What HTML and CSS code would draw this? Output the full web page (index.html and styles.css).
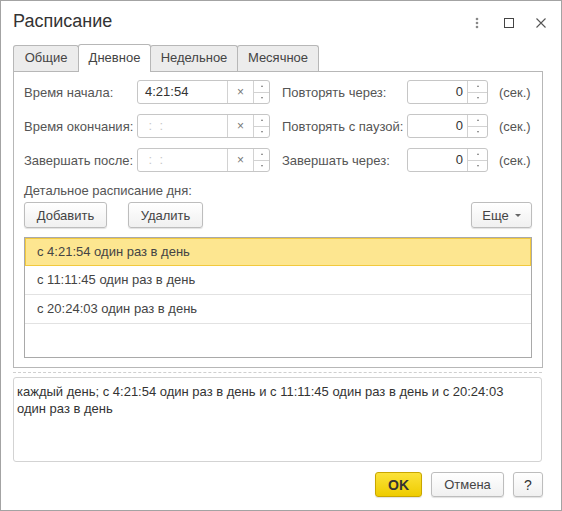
FILE: index.html
```html
<!DOCTYPE html>
<html lang="ru">
<head>
  <meta charset="UTF-8" />
  <title>Расписание</title>
  <link rel="stylesheet" href="styles.css">
</head>
<body>
  <div class="window">
    <div class="titlebar">
      <h1>Расписание</h1>
      <div class="win-icons">
        <svg class="ico-more" width="4" height="12" viewBox="0 0 4 12"><circle cx="2" cy="2" r="1.3" fill="#888"/><circle cx="2" cy="6" r="1.3" fill="#888"/><circle cx="2" cy="10" r="1.3" fill="#888"/></svg>
        <svg class="ico-max" width="10" height="10" viewBox="0 0 10 10"><rect x="0.5" y="0.5" width="9" height="9" fill="none" stroke="#444" stroke-width="1"/></svg>
        <svg class="ico-close" width="10" height="10" viewBox="0 0 10 10"><path d="M0.5 0.5L9.5 9.5M9.5 0.5L0.5 9.5" stroke="#555" stroke-width="1.1"/></svg>
      </div>
    </div>

    <div class="tabs">
      <div class="tab t1">Общие</div>
      <div class="tab t2 active">Дневное</div>
      <div class="tab t3">Недельное</div>
      <div class="tab t4">Месячное</div>
    </div>

    <div class="panel">
      <div class="fields">
        <label>Время начала:</label>
        <div class="time-input">
          <span class="value">4:21:54</span>
          <span class="clear">×</span>
          <span class="spin"><i class="up"></i><i class="down"></i></span>
        </div>
        <label class="right">Повторять через:</label>
        <div class="num-input">
          <span class="value">0</span>
          <span class="spin"><i class="up"></i><i class="down"></i></span>
        </div>
        <span class="unit">(сек.)</span>

        <label>Время окончания:</label>
        <div class="time-input">
          <span class="value empty">&nbsp;:&nbsp;&nbsp;:</span>
          <span class="clear">×</span>
          <span class="spin"><i class="up"></i><i class="down"></i></span>
        </div>
        <label class="right">Повторять с паузой:</label>
        <div class="num-input">
          <span class="value">0</span>
          <span class="spin"><i class="up"></i><i class="down"></i></span>
        </div>
        <span class="unit">(сек.)</span>

        <label>Завершать после:</label>
        <div class="time-input">
          <span class="value empty">&nbsp;:&nbsp;&nbsp;:</span>
          <span class="clear">×</span>
          <span class="spin"><i class="up"></i><i class="down"></i></span>
        </div>
        <label class="right">Завершать через:</label>
        <div class="num-input">
          <span class="value">0</span>
          <span class="spin"><i class="up"></i><i class="down"></i></span>
        </div>
        <span class="unit">(сек.)</span>
      </div>

      <div class="detail-label">Детальное расписание дня:</div>
      <div class="toolbar">
        <button class="btn add">Добавить</button>
        <button class="btn del">Удалить</button>
        <button class="btn more">Еще <i class="caret"></i></button>
      </div>

      <div class="list">
        <div class="row selected">с 4:21:54 один раз в день</div>
        <div class="row">с 11:11:45 один раз в день</div>
        <div class="row">с 20:24:03 один раз в день</div>
      </div>
    </div>

    <div class="dashed"></div>

    <div class="summary">каждый день; с 4:21:54 один раз в день и с 11:11:45 один раз в день и с 20:24:03 один раз в день</div>

    <div class="footer">
      <button class="btn ok">OK</button>
      <button class="btn cancel">Отмена</button>
      <button class="btn help">?</button>
    </div>
  </div>
</body>
</html>
```

FILE: styles.css
```css
body {
  margin: 0;
  font-family: "Liberation Sans", Arial, sans-serif;
  font-size: 13px;
  color: #333;
  background: #fff;
}

.window {
  width: 562px;
  height: 511px;
  box-sizing: border-box;
  border: 1px solid #a3a3a3;
  padding: 0 18px 0 12px;
  background: #fff;
}

.titlebar {
  height: 43px;
  display: flex;
  align-items: flex-start;
  justify-content: space-between;
}

h1 {
  margin: 10px 0 0 0;
  font-size: 18px;
  font-weight: normal;
  line-height: 20px;
  color: #333;
}

.win-icons {
  display: flex;
  align-items: center;
  margin-top: 16px;
  margin-right: -3px;
}

.ico-max {
  margin-left: 25px;
}

.ico-close {
  margin-left: 22px;
}

.tabs {
  display: flex;
  align-items: flex-end;
  height: 28px;
  margin-bottom: -1px;
  position: relative;
  z-index: 1;
}

.tab {
  height: 26px;
  box-sizing: border-box;
  text-align: center;
  line-height: 24px;
  border: 1px solid #b7b7b7;
  border-bottom: none;
  border-radius: 3px 3px 0 0;
  background: #ececec;
  color: #444;
  margin-right: -1px;
  margin-bottom: 1px;
}

.t1 { width: 66px; }
.t2 { width: 73px; }
.t3 { width: 88px; }
.t4 { width: 82px; }

.tab.active {
  height: 28px;
  margin-bottom: 0;
  background: #fff;
  line-height: 26px;
}

.panel {
  width: 530px;
  height: 297px;
  box-sizing: border-box;
  border: 1px solid #b7b7b7;
  padding: 8px 10px 0 10px;
}

.fields {
  display: grid;
  grid-template-columns: 113px 133px 137px 81px auto;
  grid-auto-rows: 24px;
  row-gap: 10px;
  align-items: center;
}

.fields label {
  color: #555;
}

.fields label.right {
  padding-left: 12px;
}

.unit {
  padding-left: 11px;
  color: #555;
}

.time-input,
.num-input {
  display: flex;
  height: 24px;
  box-sizing: border-box;
  border: 1px solid #c6c6c6;
  border-radius: 3px;
  background: #fff;
}

.time-input .value {
  flex: 1;
  padding-left: 7px;
  line-height: 22px;
  color: #333;
}

.num-input .value {
  flex: 1;
  text-align: right;
  padding-right: 4px;
  line-height: 22px;
  color: #333;
}

.value.empty {
  color: #c8c8c8;
}

.clear {
  width: 25px;
  border-left: 1px solid #d2d2d2;
  text-align: center;
  line-height: 22px;
  color: #777;
  font-size: 12px;
}

.spin {
  width: 15px;
  border-left: 1px solid #d2d2d2;
  display: flex;
  flex-direction: column;
}

.num-input .spin {
  width: 19px;
}

.spin i {
  flex: 1;
  display: flex;
  align-items: center;
  justify-content: center;
}

.spin i.up {
  border-bottom: 1px solid #d2d2d2;
}

.spin i::after {
  content: "";
  border-left: 1.5px solid transparent;
  border-right: 1.5px solid transparent;
}

.spin i.up::after {
  border-bottom: 2px solid #777;
}

.spin i.down::after {
  border-top: 2px solid #777;
}

.detail-label {
  margin-top: 11px;
  line-height: 15px;
  color: #555;
}

.toolbar {
  display: flex;
  margin-top: 4px;
}

.btn {
  font-family: "Liberation Sans", Arial, sans-serif;
  font-size: 13px;
  color: #444;
  height: 26px;
  box-sizing: border-box;
  border: 1px solid #bdbdbd;
  border-radius: 3px;
  background: linear-gradient(#ffffff, #f0f0f0);
  box-shadow: 0 1px 1px rgba(0, 0, 0, 0.12);
  padding: 0;
}

.btn.add {
  width: 83px;
}

.btn.del {
  width: 75px;
  margin-left: 21px;
}

.btn.more {
  width: 61px;
  margin-left: auto;
  display: flex;
  align-items: center;
  justify-content: center;
  gap: 6px;
}

.caret {
  border-left: 3px solid transparent;
  border-right: 3px solid transparent;
  border-top: 3px solid #666;
  margin-top: 1px;
}

.list {
  margin-top: 9px;
  height: 121px;
  box-sizing: border-box;
  border: 1px solid #a9a9a9;
}

.row {
  height: 29px;
  box-sizing: border-box;
  line-height: 28px;
  padding-left: 12px;
  border-bottom: 1px solid #e2e2e2;
  color: #444;
}

.row.selected {
  height: 28px;
  line-height: 26px;
  background: #fde690;
  border: 1px solid #f2c93d;
  padding-left: 11px;
}

.dashed {
  width: 529px;
  margin-top: 4px;
  border-top: 1px dashed #cfcfcf;
}

.summary {
  width: 529px;
  height: 85px;
  box-sizing: border-box;
  margin-top: 4px;
  border: 1px solid #d3d3d3;
  border-radius: 3px;
  padding: 5px 26px 5px 3px;
  line-height: 17px;
  color: #333;
}

.footer {
  display: flex;
  justify-content: flex-end;
  gap: 9px;
  width: 530px;
  margin-top: 10px;
}

.footer .btn {
  height: 25px;
}

.btn.ok {
  width: 47px;
  background: linear-gradient(#fbe23a, #efcc00);
  border-color: #c9a600;
  font-weight: bold;
  font-size: 14px;
  color: #333;
}

.btn.cancel {
  width: 73px;
}

.btn.help {
  width: 30px;
  font-size: 14px;
  color: #333;
}
```
